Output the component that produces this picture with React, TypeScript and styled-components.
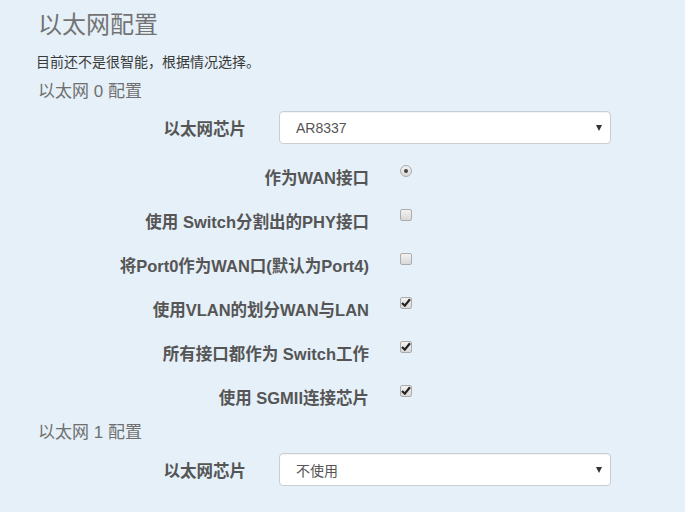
import React from 'react';
import styled, { createGlobalStyle } from 'styled-components';

const GlobalStyle = createGlobalStyle`
  body {
    margin: 0;
    background: #e5f0f9;
    font-family: "Liberation Sans", "Noto Sans CJK SC", sans-serif;
  }
`;

const Page = styled.div`
  width: 685px;
  height: 512px;
  padding-left: 36px;
  box-sizing: border-box;
  overflow: hidden;
  background: #e5f0f9;
`;

const Title = styled.h1`
  margin: 10px 0 0 2px;
  font-size: 24px;
  line-height: 30px;
  font-weight: normal;
  color: #737373;
`;

const Intro = styled.p`
  margin: 12px 0 0;
  font-size: 14px;
  line-height: 20px;
  color: #3a3a3a;
`;

const Section = styled.h3<{ $top: number }>`
  margin: ${(p) => p.$top}px 0 0 2px;
  font-size: 17px;
  line-height: 22px;
  font-weight: normal;
  color: #707070;
`;

const SelectRow = styled.div<{ $top: number }>`
  display: grid;
  grid-template-columns: 210px 332px;
  column-gap: 33px;
  align-items: center;
  margin-top: ${(p) => p.$top}px;
`;

const Label = styled.label`
  text-align: right;
  font-size: 16.5px;
  font-weight: bold;
  color: #555;
  white-space: nowrap;
`;

const SelectBox = styled.div`
  height: 33px;
  box-sizing: border-box;
  display: flex;
  align-items: center;
  justify-content: space-between;
  padding: 0 8px 0 16px;
  background: #fff;
  border: 1px solid #c9ced3;
  border-radius: 4px;
  box-shadow: inset 0 1px 1px rgba(0, 0, 0, 0.05);
  font-size: 14px;
  color: #555;
`;

const Arrow = styled.span`
  width: 0;
  height: 0;
  border-left: 3px solid transparent;
  border-right: 3px solid transparent;
  border-top: 6px solid #333;
`;

const Options = styled.div`
  margin-top: 11px;
`;

const CheckRow = styled.div`
  display: grid;
  grid-template-columns: 333px 12px;
  column-gap: 31px;
  align-items: center;
  height: 44px;
`;

const Box = styled.span<{ $round?: boolean }>`
  width: 12px;
  height: 12px;
  box-sizing: border-box;
  margin-top: -13px;
  display: flex;
  align-items: center;
  justify-content: center;
  border: 1px solid #acacac;
  border-radius: ${(p) => (p.$round ? '50%' : '2px')};
  background: linear-gradient(#f2f2f2, #d8d8d8);
`;

const Dot = styled.span`
  width: 4px;
  height: 4px;
  border-radius: 50%;
  background: #444;
`;

function Check() {
  return (
    <svg width="10" height="9" viewBox="0 0 10 9">
      <path d="M1 5 L3.8 7.6 L9 1.2" fill="none" stroke="#222" strokeWidth="2.2" />
    </svg>
  );
}

const options = [
  { label: '作为WAN接口', kind: 'radio', on: true },
  { label: '使用 Switch分割出的PHY接口', kind: 'check', on: false },
  { label: '将Port0作为WAN口(默认为Port4)', kind: 'check', on: false },
  { label: '使用VLAN的划分WAN与LAN', kind: 'check', on: true },
  { label: '所有接口都作为 Switch工作', kind: 'check', on: true },
  { label: '使用 SGMII连接芯片', kind: 'check', on: true },
];

export default function App() {
  return (
    <Page>
      <GlobalStyle />
      <Title>以太网配置</Title>
      <Intro>目前还不是很智能，根据情况选择。</Intro>
      <Section $top={9}>以太网 0 配置</Section>
      <SelectRow $top={8}>
        <Label>以太网芯片</Label>
        <SelectBox>
          AR8337
          <Arrow />
        </SelectBox>
      </SelectRow>
      <Options>
        {options.map((o) => (
          <CheckRow key={o.label}>
            <Label>{o.label}</Label>
            {o.kind === 'radio' ? (
              <Box $round>{o.on && <Dot />}</Box>
            ) : (
              <Box>{o.on && <Check />}</Box>
            )}
          </CheckRow>
        ))}
      </Options>
      <Section $top={3}>以太网 1 配置</Section>
      <SelectRow $top={9}>
        <Label>以太网芯片</Label>
        <SelectBox>
          不使用
          <Arrow />
        </SelectBox>
      </SelectRow>
    </Page>
  );
}
